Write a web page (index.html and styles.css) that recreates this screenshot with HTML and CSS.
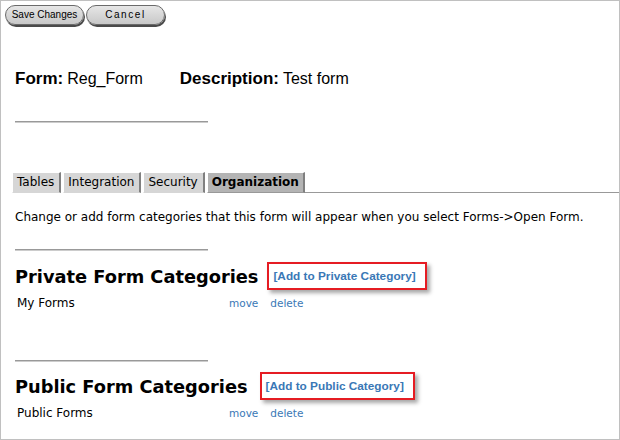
FILE: index.html
```html
<!DOCTYPE html>
<html>
<head>
<meta charset="utf-8">
<link rel="stylesheet" href="styles.css">
</head>
<body>
<div class="frame">
  <div class="toolbar">
    <button class="pill">Save Changes</button>
    <button class="pill pill-wide">Cancel</button>
  </div>
  <div class="meta">
    <div class="field"><span class="label">Form:</span> <span class="value">Reg_Form</span></div>
    <div class="field"><span class="label">Description:</span> <span class="value">Test form</span></div>
  </div>
  <div class="rule rule-meta"></div>
  <div class="tabs">
    <span class="tab">Tables</span>
    <span class="tab">Integration</span>
    <span class="tab">Security</span>
    <span class="tab active">Organization</span>
    <span class="tab-line"></span>
  </div>
  <p class="intro">Change or add form categories that this form will appear when you select Forms-&gt;Open Form.</p>
  <div class="rule rule-sec"></div>
  <div class="section">
    <div class="sec-head">
      <h2>Private Form Categories</h2>
      <a class="add" href="#">[Add to Private Category]</a>
    </div>
    <div class="row">
      <span class="name">My Forms</span>
      <a class="act" href="#">move</a>
      <a class="act" href="#">delete</a>
    </div>
  </div>
  <div class="rule rule-sec2"></div>
  <div class="section section-pub">
    <div class="sec-head">
      <h2>Public Form Categories</h2>
      <a class="add" href="#">[Add to Public Category]</a>
    </div>
    <div class="row">
      <span class="name">Public Forms</span>
      <a class="act" href="#">move</a>
      <a class="act" href="#">delete</a>
    </div>
  </div>
</div>
</body>
</html>
```
FILE: styles.css
```css
html, body { margin: 0; padding: 0; background: #fff; }
.frame {
  width: 620px; height: 440px; box-sizing: border-box;
  border: 1px solid #c0c0c0;
  font-family: "DejaVu Sans", Verdana, sans-serif;
  color: #000; overflow: hidden;
}
.toolbar { display: flex; gap: 2px; padding: 4px 0 0 4px; }
.pill {
  font-family: "Liberation Sans", Arial, sans-serif;
  font-size: 10px; height: 20px; width: 79px; padding: 0 0 1px 0;
  border: 1px solid #6a6a6a; border-radius: 11px;
  background: linear-gradient(#e6e6e6, #c8c8c8);
  box-shadow: 1px 2px 0 #4a4a4a;
  color: #000; text-align: center;
}
.pill-wide { letter-spacing: 1.6px; }
.meta { display: flex; gap: 37px; padding: 44px 0 0 14px; }
.field { display: flex; align-items: baseline; gap: 4px; }
.label { font-family: "Liberation Sans", Arial, sans-serif; font-size: 17px; font-weight: bold; }
.value { font-family: "Liberation Sans", Arial, sans-serif; font-size: 16px; }
.rule { width: 193px; height: 1px; background: #999; margin-left: 14px; border-bottom: 1px solid #ccc; }
.rule-meta { margin-top: 32px; }
.tabs { display: flex; align-items: flex-end; margin: 49px 0 0 11px; font-size: 12px; }
.tab {
  background: #d6d6d6; padding: 1px 5px 1px 4px; margin-right: 2px;
  border-top: 1px solid #fff; border-left: 1px solid #fff;
  border-right: 2px solid #808080; line-height: 17px;
  border-bottom: 1px solid #d6d6d6;
}
.tab.active { background: #b4b4b4; font-weight: bold; border-bottom: 1px solid #999; margin-right: 0; padding-right: 4px; }
.tab-line { flex: 1; border-bottom: 1px solid #999; }
.intro { margin: 17px 0 0 14px; font-size: 12px; }
.rule-sec { margin-top: 25px; }
.section { padding-left: 14px; }
.sec-head { display: flex; align-items: center; gap: 9px; margin-top: 11px; }
.section-pub .sec-head { gap: 12px; margin-top: 10px; }
h2 { margin: 0; font-size: 17.8px; font-weight: bold; }
.add {
  font-family: "Liberation Sans", Arial, sans-serif; font-weight: bold; font-size: 11.8px;
  color: #3a78b6; text-decoration: none;
  border: 2px solid #e51c23; padding: 5px 9px 5px 4px;
  box-shadow: 3px 3px 4px rgba(0,0,0,0.35);
}
.row { display: flex; align-items: baseline; font-size: 12px; margin-top: 6px; padding-left: 2px; }
.name { width: 212px; }
.act { color: #3a78b6; text-decoration: none; margin-right: 12px; font-size: 10.5px; }
.rule-sec2 { margin-top: 50px; }
```
